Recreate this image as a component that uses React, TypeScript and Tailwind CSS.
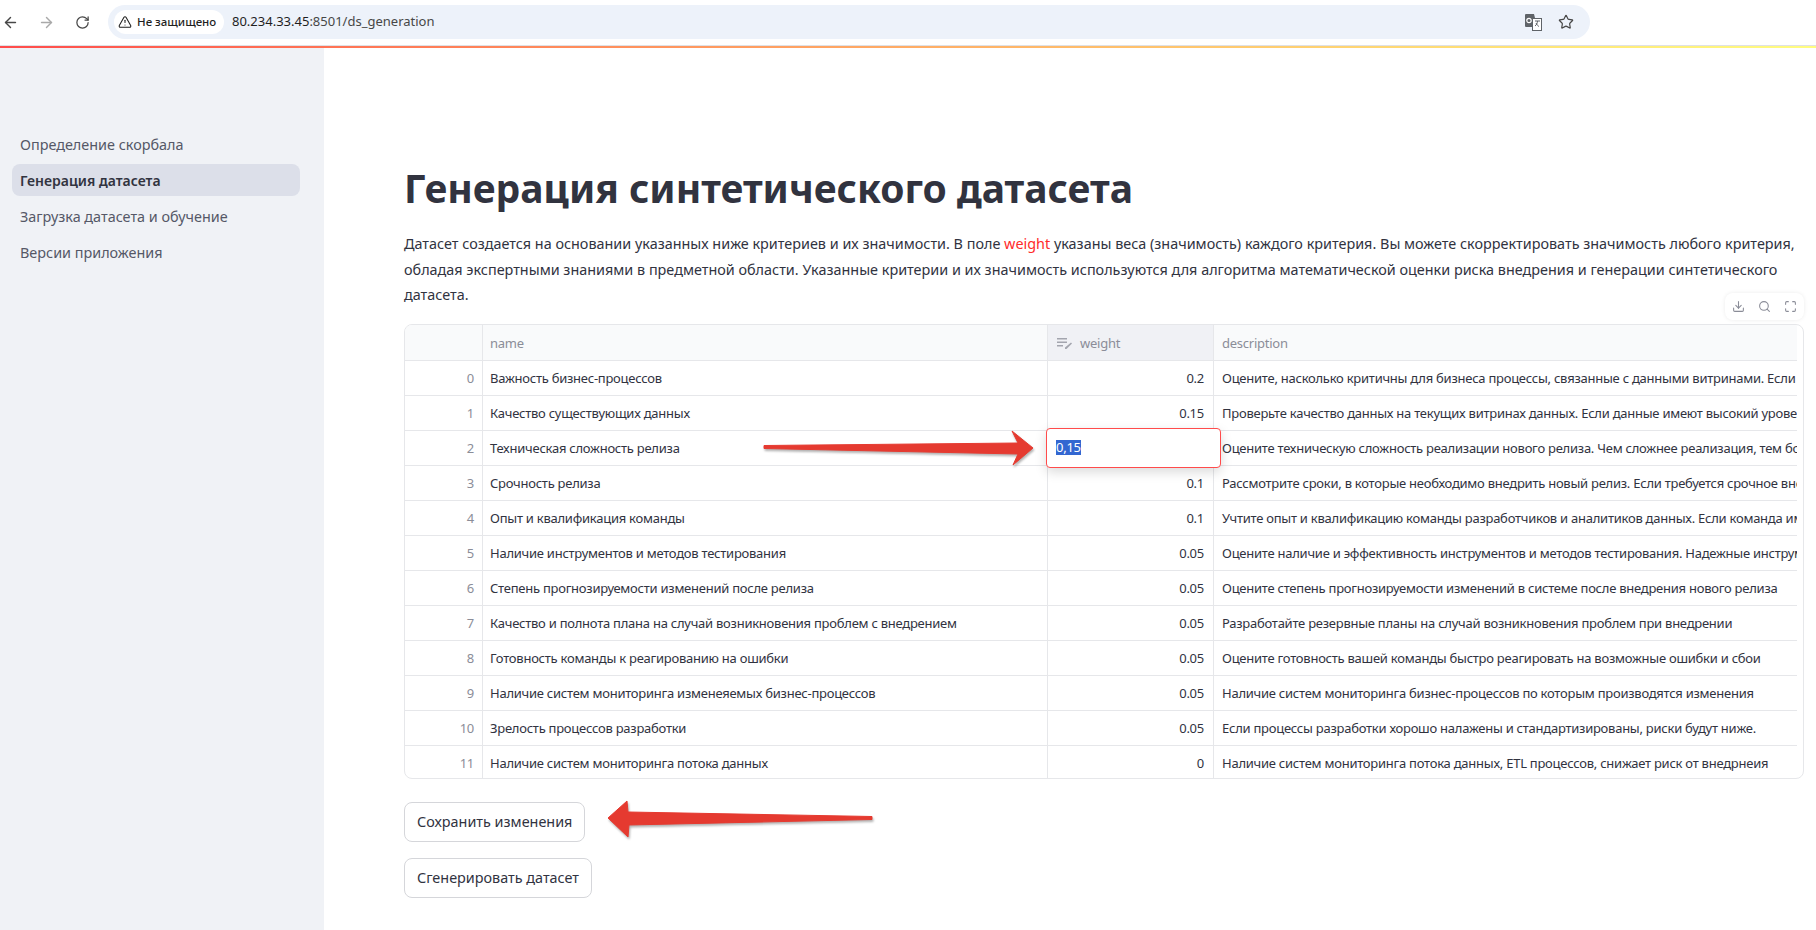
import { ArrowLeft, ArrowRight, Download, Maximize, RotateCw, Search, Star, TriangleAlert } from 'lucide-react';

const rows = [
  ['Важность бизнес-процессов', '0.2', 'Оцените, насколько критичны для бизнеса процессы, связанные с данными витринами. Если процессы'],
  ['Качество существующих данных', '0.15', 'Проверьте качество данных на текущих витринах данных. Если данные имеют высокий уровень качества'],
  ['Техническая сложность релиза', '', 'Оцените техническую сложность реализации нового релиза. Чем сложнее реализация, тем больше риск'],
  ['Срочность релиза', '0.1', 'Рассмотрите сроки, в которые необходимо внедрить новый релиз. Если требуется срочное внедрение'],
  ['Опыт и квалификация команды', '0.1', 'Учтите опыт и квалификацию команды разработчиков и аналитиков данных. Если команда имеет опыт'],
  ['Наличие инструментов и методов тестирования', '0.05', 'Оцените наличие и эффективность инструментов и методов тестирования. Надежные инструменты снижают'],
  ['Степень прогнозируемости изменений после релиза', '0.05', 'Оцените степень прогнозируемости изменений в системе после внедрения нового релиза'],
  ['Качество и полнота плана на случай возникновения проблем с внедрением', '0.05', 'Разработайте резервные планы на случай возникновения проблем при внедрении'],
  ['Готовность команды к реагированию на ошибки', '0.05', 'Оцените готовность вашей команды быстро реагировать на возможные ошибки и сбои'],
  ['Наличие систем мониторинга изменеяемых бизнес-процессов', '0.05', 'Наличие систем мониторинга бизнес-процессов по которым производятся изменения'],
  ['Зрелость процессов разработки', '0.05', 'Если процессы разработки хорошо налажены и стандартизированы, риски будут ниже.'],
  ['Наличие систем мониторинга потока данных', '0', 'Наличие систем мониторинга потока данных, ETL процессов, снижает риск от внедрнеия'],
];

const nav = ['Определение скорбала', 'Генерация датасета', 'Загрузка датасета и обучение', 'Версии приложения'];

const BrowserBar = () => (
  <header className="h-[46px] flex items-center border-b border-[#dfe1e5] bg-white font-['Noto_Sans',sans-serif]">
    <ArrowLeft size={17} strokeWidth={2} className="ml-[2px] text-[#474747]" />
    <ArrowRight size={17} strokeWidth={2} className="ml-[19px] text-[#a9a9a9]" />
    <RotateCw size={15} strokeWidth={2} className="ml-[20px] text-[#474747]" />
    <div className="ml-[18px] w-[1482px] h-[34px] -mt-[1px] rounded-full bg-[#edf2fa] flex items-center px-[6px]">
      <div className="w-[110px] h-[24px] rounded-full bg-white flex items-center pl-[4px] text-[11.5px] font-medium text-[#1f1f1f] whitespace-nowrap">
        <TriangleAlert size={14} strokeWidth={1.8} className="mr-[5px] shrink-0" />
        Не защищено
      </div>
      <div className="ml-[8px] text-[13px] text-[#474747] whitespace-nowrap">
        <span className="text-[#1f1f1f]">80.234.33.45</span>:8501/ds_generation
      </div>
      <svg width="17" height="17" viewBox="0 0 17 17" className="ml-auto mr-[16px]">
        <path d="M1 0h8l1 4h5a1 1 0 0 1 1 1v11a1 1 0 0 1-1 1H8l-1-4H1a1 1 0 0 1-1-1V1a1 1 0 0 1 1-1z" fill="#5f6368" />
        <rect x="7.5" y="4.5" width="9" height="12" fill="#fff" stroke="#5f6368" />
        <circle cx="4" cy="6.5" r="2.2" fill="none" stroke="#fff" strokeWidth="1.2" />
        <path d="M10 7h5M12.5 7c0 2-1 4-2.5 5M11 9c1 2 2 3 3 3.5" fill="none" stroke="#5f6368" />
      </svg>
      <Star size={16} strokeWidth={1.8} className="mr-[10px] text-[#474747]" />
    </div>
  </header>
);

const EditIcon = () => (
  <svg width="15" height="13" viewBox="0 0 15 13" className="mr-[8px] shrink-0">
    <path d="M0 1h10v1.5H0zM0 4.5h10V6H0zM0 8h6v1.5H0z" fill="#a3a5ae" />
    <path d="M14 5.5l1 1-5.5 5.5H8v-1.5z" fill="#a3a5ae" />
  </svg>
);

const DataTable = () => (
  <div className="relative w-[1400px] text-[13px] tracking-[-0.25px] text-[#31333f]">
    <div className="absolute -top-[31px] right-0 w-[79px] h-[27px] bg-white rounded-lg shadow-[0_0_4px_rgba(0,0,0,0.08)] flex items-center justify-between px-[7px] text-[#8b8d98]">
      <Download size={13} />
      <Search size={13} />
      <Maximize size={13} />
    </div>
    <div className="h-[455px] border border-[#e6e7ea] rounded-[8px] overflow-hidden pr-[6px]">
      <div className="grid grid-cols-[78px_565px_166px_1fr] h-[36px] border-b border-[#e6e7ea] bg-[#f9fafb] text-[#8b8d98] items-stretch">
        <div className="border-r border-[#e6e7ea]" />
        <div className="border-r border-[#e6e7ea] flex items-center pl-[7px] pr-[8px] pt-[2px]">name</div>
        <div className="border-r border-[#e6e7ea] flex items-center px-[9px] pt-[2px] bg-[#f0f1f5]"><EditIcon />weight</div>
        <div className="flex items-center px-[8px] pt-[2px]">description</div>
      </div>
      {rows.map((r, i) => {
        const shift = i === 11 ? '' : 'pt-[2px]';
        return (
          <div key={i} className="grid grid-cols-[78px_565px_166px_1fr] h-[35px] border-b border-[#e6e7ea] last:border-b-0 items-stretch">
            <div className={`border-r border-[#e6e7ea] flex items-center justify-end px-[8px] text-[#8b8d98] ${shift}`}>{i}</div>
            <div className={`border-r border-[#e6e7ea] flex items-center pl-[7px] pr-[8px] whitespace-nowrap overflow-hidden ${shift}`}>{r[0]}</div>
            <div className={`border-r border-[#e6e7ea] flex items-center justify-end px-[9px] ${shift}`}>{r[1]}</div>
            <div className={`flex items-center px-[8px] whitespace-nowrap overflow-hidden ${shift}`}>{r[2]}</div>
          </div>
        );
      })}
    </div>
    <div className="absolute left-[642px] top-[104px] w-[175px] h-[40px] bg-white border border-[#ff4b4b] rounded-[4px] shadow-[0_4px_12px_rgba(0,0,0,0.15)] flex items-center pl-[9px]">
      <span className="bg-[#3367d1] text-white leading-[15px]">0,15</span>
    </div>
  </div>
);

const App = () => {
  return (
    <div className="relative h-screen overflow-hidden bg-white font-['Noto_Sans',sans-serif] text-[#31333f]">
      <BrowserBar />
      <div className="h-[2px] bg-gradient-to-r from-[#ff4b4b] to-[#fffd80]" />
      <div className="flex h-[882px]">
        <aside className="w-[324px] shrink-0 bg-[#f0f2f6] pt-[80px] px-[12px] flex flex-col gap-[4px] text-[14.4px] text-[#555867]">
          {nav.map((n, i) => (
            <div key={n} className={`h-[32px] w-[288px] flex items-center px-[8px] rounded-lg ${i === 1 ? 'bg-[#dcdfe9] font-semibold text-[14px] text-[#31333f]' : 'pt-[2px]'}`}>{n}</div>
          ))}
        </aside>
        <main className="flex-1 pl-[80px] pr-[12px] pt-[113px]">
          <h1 className="text-[39px] leading-[53px] font-bold whitespace-nowrap">Генерация синтетического датасета</h1>
          <p className="mt-[17px] mb-[16px] text-[14.4px] leading-[25.6px] whitespace-nowrap">
            Датасет создается на основании указанных ниже критериев и их значимости. В поле <span className="text-[#ff2b2b]">weight</span> указаны веса (значимость) каждого критерия. Вы можете скорректировать значимость любого критерия,<br />
            обладая экспертными знаниями в предметной области. Указанные критерии и их значимость используются для алгоритма математической оценки риска внедрения и генерации синтетического<br />
            датасета.
          </p>
          <DataTable />
          <button className="block mt-[23px] h-[40px] px-[12px] border border-[#d5d6da] rounded-lg text-[14.4px] bg-white">Сохранить изменения</button>
          <button className="block mt-[16px] h-[40px] px-[12px] border border-[#d5d6da] rounded-lg text-[14.4px] bg-white">Сгенерировать датасет</button>
        </main>
      </div>
      <svg width="280" height="40" viewBox="0 0 280 40" className="absolute left-[758px] top-[428px] drop-shadow-[1px_2px_1px_rgba(0,0,0,0.3)]">
        <path d="M6 17.5L260 15L254 3L275 20L255 37L260 26L6 20.5Z" fill="#e53a30" stroke="#e53a30" strokeLinejoin="round" />
      </svg>
      <svg width="270" height="40" viewBox="0 0 270 40" className="absolute left-[606px] top-[799px] drop-shadow-[1px_2px_1px_rgba(0,0,0,0.3)]">
        <path d="M2 19L21 2L22 13L266 17.5V20.5L23 26L22 38Z" fill="#e53a30" stroke="#e53a30" strokeLinejoin="round" />
      </svg>
    </div>
  );
};

export default App;
